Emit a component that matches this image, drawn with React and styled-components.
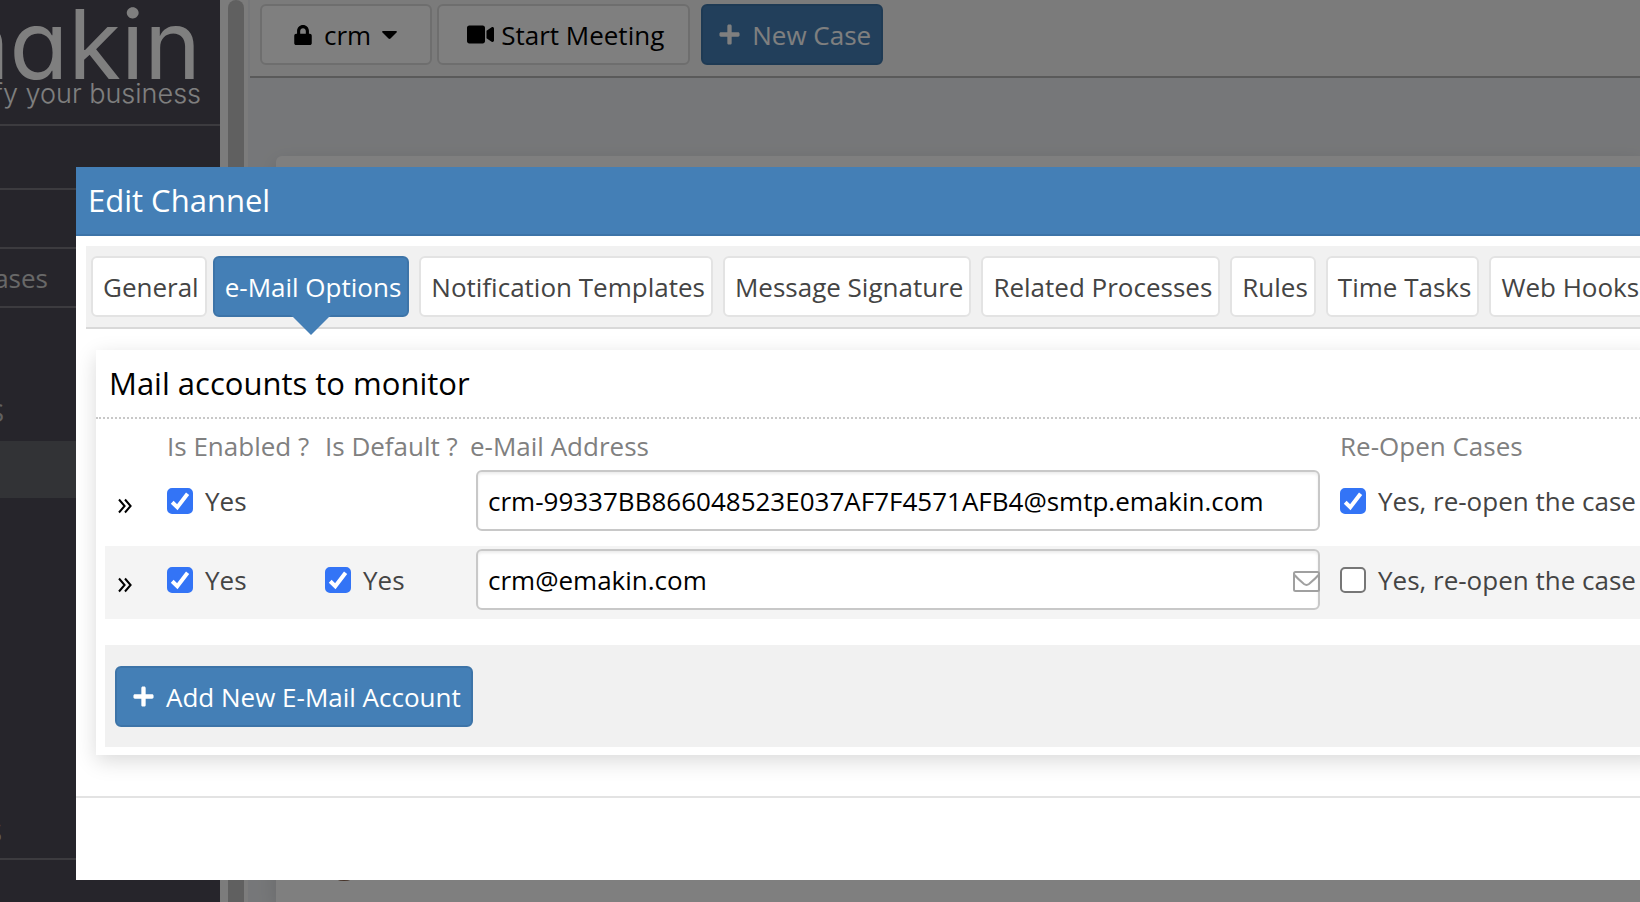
import styled, { createGlobalStyle } from 'styled-components';
import { FaLock, FaVideo, FaPlus } from 'react-icons/fa';

const TABS = [
  'General',
  'e-Mail Options',
  'Notification Templates',
  'Message Signature',
  'Related Processes',
  'Rules',
  'Time Tasks',
  'Web Hooks',
];

const ACCOUNTS = [
  {
    id: 'first',
    address: 'crm-99337BB866048523E037AF7F4571AFB4@smtp.emakin.com',
    canBeDefault: false,
    hasMailIcon: false,
    reopen: true,
  },
  {
    id: 'second',
    address: 'crm@emakin.com',
    canBeDefault: true,
    hasMailIcon: true,
    reopen: false,
  },
];

export default function App() {
  return (
    <>
      <GlobalStyle />
      <Page>
        <Sidebar>
          <Brand>
            <BrandName>emakin</BrandName>
            <BrandSlogan>simplify your business</BrandSlogan>
          </Brand>
          <SideRow $height={62} />
          <SideRow $height={57} />
          <SideRow $height={57}>
            <SideLink href="#cases">Cases</SideLink>
          </SideRow>
          <SideGroup $height={133}>
            <SideHeading>S</SideHeading>
          </SideGroup>
          <SideSelected />
          <SideGroup $height={362} $line>
            <SideHeading $last>S</SideHeading>
          </SideGroup>
        </Sidebar>
        <ScrollTrack>
          <ScrollThumb />
        </ScrollTrack>
        <Main>
          <Toolbar>
            <ToolButton type="button" $pad="0 33px 0 31px" $gap={11}>
              <FaLock size={20} />
              <span>crm</span>
              <Caret viewBox="0 0 15 8">
                <path d="M1 0h13q1.500 .5 .5 1.500L8.500 7.500q-1 .8-2 0L.5 1.500Q-.5 .5 1 0z" />
              </Caret>
            </ToolButton>
            <ToolButton type="button" $pad="0 24px 0 28px" $gap={7}>
              <FaVideo size={27} />
              <span>Start Meeting</span>
            </ToolButton>
            <ToolbarPrimary type="button">
              <FaPlus size={23} />
              New Case
            </ToolbarPrimary>
          </Toolbar>
          <Card>
            <Avatar />
          </Card>
        </Main>
      </Page>
      <Overlay />
      <Modal role="dialog" aria-labelledby="dialog-title">
        <ModalHeader>
          <ModalTitle id="dialog-title">Edit Channel</ModalTitle>
        </ModalHeader>
        <ModalBody>
          <TabBar>
            {TABS.map((tab) => (
              <Tab key={tab} type="button" $active={tab === 'e-Mail Options'}>
                {tab}
              </Tab>
            ))}
          </TabBar>
          <Panel>
            <PanelTitle>Mail accounts to monitor</PanelTitle>
            <PanelBody>
              <AccountTable>
                <colgroup>
                  <Col $width={62} />
                  <Col $width={158} />
                  <Col $width={145} />
                  <col />
                  <Col $width={320} />
                </colgroup>
                <thead>
                  <tr>
                    <td />
                    <HeadCell>Is Enabled ?</HeadCell>
                    <HeadCell>Is Default ?</HeadCell>
                    <HeadCell>e-Mail Address</HeadCell>
                    <HeadCell>Re-Open Cases</HeadCell>
                  </tr>
                </thead>
                <tbody>
                  {ACCOUNTS.map((account) => (
                    <AccountRow key={account.id} account={account} />
                  ))}
                </tbody>
              </AccountTable>
              <PanelFooter>
                <PrimaryButton type="button">
                  <FaPlus size={23} />
                  Add New E-Mail Account
                </PrimaryButton>
              </PanelFooter>
            </PanelBody>
          </Panel>
        </ModalBody>
        <ModalFooter />
      </Modal>
    </>
  );
}

function AccountRow({ account }) {
  return (
    <Row>
      <Cell>
        <ExpandButton type="button" aria-label="Expand">
          <svg width="16" height="16" viewBox="0 0 16 16" fill="none" stroke="#000" strokeWidth="2">
            <path d="M2 1.500 7.600 8 2 14.500M8 1.500 13.600 8 8 14.500" />
          </svg>
        </ExpandButton>
      </Cell>
      <Cell>
        <CheckField label="Yes" checked />
      </Cell>
      <Cell>{account.canBeDefault && <CheckField label="Yes" checked />}</Cell>
      <Cell>
        <AddressField>
          <AddressInput type="text" aria-label="e-Mail Address" defaultValue={account.address} />
          {account.hasMailIcon && (
            <MailIcon viewBox="0 0 27 21">
              <rect x="1" y="1" width="25" height="19" rx="1.5" />
              <path d="M1.500 4C5 8 8 10.500 11 13c1.800 1.300 3.200 1.300 5 0 3-2.500 6-5 9.500-9" />
            </MailIcon>
          )}
        </AddressField>
      </Cell>
      <Cell>
        <CheckField label="Yes, re-open the case" checked={account.reopen} />
      </Cell>
    </Row>
  );
}

function CheckField({ label, checked }) {
  return (
    <CheckLabel>
      <CheckBox>
        <CheckInput type="checkbox" defaultChecked={checked} />
        <CheckMark viewBox="0 0 26 26">
          <path d="M5.200 14.300 10.300 19.200 20.600 5.800" />
        </CheckMark>
      </CheckBox>
      {label}
    </CheckLabel>
  );
}

const GlobalStyle = createGlobalStyle`
  * {
    box-sizing: border-box;
  }

  body {
    margin: 0;
    overflow: hidden;
    font-family: 'Open Sans', 'Liberation Sans', sans-serif;
    font-size: 26px;
    color: #444;
  }

  button, input {
    font: inherit;
  }
`;

const Page = styled.div`
  display: flex;
  height: 100vh;
  overflow: hidden;
  background: #edeff2;
`;

const Sidebar = styled.nav`
  width: 220px;
  flex-shrink: 0;
  overflow: hidden;
  background: #4c4a56;
`;

const Brand = styled.div`
  display: flex;
  flex-direction: column;
  align-items: flex-end;
  height: 126px;
  padding-right: 19px;
  border-bottom: 2px solid #78767f;
  font-family: Inter, 'Liberation Sans', sans-serif;
  font-feature-settings: 'cv11';
  color: #fff;
  white-space: nowrap;
`;

const BrandName = styled.div`
  font-size: 96px;
  line-height: 88px;
`;

const BrandSlogan = styled.div`
  font-size: 27px;
  font-weight: 300;
  line-height: 12px;
`;

const SideRow = styled.div`
  display: flex;
  align-items: center;
  height: ${({ $height }) => $height + 2}px;
  border-bottom: 2px solid #78767f;
`;

const SideLink = styled.a`
  display: flex;
  justify-content: flex-end;
  width: 48px;
  color: #d0d0d0;
  text-decoration: none;
`;

const SideGroup = styled.div`
  display: flex;
  flex-direction: column;
  justify-content: center;
  height: ${({ $height }) => $height}px;
  border-bottom: ${({ $line }) => ($line ? '2px solid #78767f' : 'none')};
`;

const SideHeading = styled.div`
  display: flex;
  justify-content: flex-end;
  width: ${({ $last }) => ($last ? 2 : 4)}px;
  margin-top: ${({ $last }) => ($last ? 308 : 74)}px;
  color: #c0c0c0;
`;

const SideSelected = styled.div`
  height: 57px;
  background: #64666c;
`;

const ScrollTrack = styled.div`
  flex-shrink: 0;
  width: 28px;
  padding: 0 4px 0 8px;
  background: #f8f8f8;
`;

const ScrollThumb = styled.div`
  height: 100%;
  border-radius: 8px 8px 0 0;
  background: #c1c1c1;
`;

const Main = styled.main`
  display: flex;
  flex-direction: column;
  flex-grow: 1;
  padding-left: 2px;
`;

const Toolbar = styled.header`
  display: flex;
  height: 78px;
  padding: 4px 10px;
  border-bottom: 2px solid #b5b5b5;
  background: #f7f7f7;
`;

const Button = styled.button`
  display: flex;
  align-items: center;
  height: 61px;
  border-radius: 6px;
  white-space: nowrap;
`;

const ToolButton = styled(Button)`
  gap: ${({ $gap }) => $gap}px;
  margin-right: 5px;
  padding: ${({ $pad }) => $pad};
  border: 2px solid #dcdcdc;
  background: #fff;
  color: #000;
`;

const Caret = styled.svg`
  width: 15px;
  height: 8px;
`;

const PrimaryButton = styled(Button)`
  gap: 11px;
  padding: 0 10px 0 15px;
  border: 2px solid #3d74a8;
  background: #447fb6;
  color: #fff;
`;

const ToolbarPrimary = styled(PrimaryButton)`
  margin-left: 6px;
`;

const Card = styled.section`
  flex-grow: 1;
  margin: 78px 0 0 26px;
  padding: 685px 0 0 48px;
  border-radius: 6px 0 0 0;
  background: #fff;
  box-shadow: 0 6px 20px rgba(0, 0, 0, 0.12);
`;

const Avatar = styled.div`
  width: 40px;
  height: 40px;
  border-radius: 50%;
  background: #8a6450;
`;

const Overlay = styled.div`
  position: fixed;
  inset: 0;
  background: rgba(0, 0, 0, 0.5);
`;

const Modal = styled.div`
  position: fixed;
  top: 167px;
  left: 76px;
  right: 0;
  overflow: hidden;
  background: #fff;
`;

const ModalHeader = styled.div`
  display: flex;
  align-items: center;
  height: 69px;
  padding: 0 12px 2px;
  border-bottom: 2px solid #3d74a8;
  background: #447fb6;
`;

const ModalTitle = styled.h1`
  margin: 0;
  font-size: 31px;
  font-weight: 400;
  color: #fff;
`;

const ModalBody = styled.div`
  padding: 10px 0 41px 10px;
`;

const ModalFooter = styled.div`
  height: 84px;
  border-top: 2px solid #e3e3e3;
`;

const TabBar = styled.div`
  display: flex;
  height: 83px;
  padding: 10px 0 0 5px;
  border-bottom: 2px solid #d9d9d9;
  background: #f1f1f1;
`;

const Tab = styled(Button)`
  position: relative;
  flex-shrink: 0;
  margin-right: 10px;
  padding: 0 6px 0 10px;
  border: 2px solid ${({ $active }) => ($active ? '#3d74a8' : '#e3e3e3')};
  background: ${({ $active }) => ($active ? '#447fb6' : '#fff')};
  color: ${({ $active }) => ($active ? '#fff' : '#444')};

  &:first-child {
    margin-right: 6px;
  }

  &::after {
    content: '';
    display: ${({ $active }) => ($active ? 'block' : 'none')};
    position: absolute;
    top: 57px;
    left: 50%;
    margin-left: -20px;
    border: 20px solid transparent;
    border-top-color: #447fb6;
    border-bottom: 0;
  }
`;

/* the panel runs on past the right edge of the dialog */
const Panel = styled.section`
  margin: 21px -20px 0 10px;
  background: #fff;
  box-shadow: 0 6px 20px rgba(0, 0, 0, 0.15);
`;

const PanelTitle = styled.h2`
  display: flex;
  align-items: center;
  height: 69px;
  margin: 0;
  padding: 0 13px 2px;
  border-bottom: 2px dotted #c8c8c8;
  font-size: 31px;
  font-weight: 400;
  color: #000;
`;

const PanelBody = styled.div`
  padding: 0 0 8px 9px;
`;

const AccountTable = styled.table`
  width: 100%;
  table-layout: fixed;
  border-spacing: 0 6px;
`;

const Col = styled.col`
  width: ${({ $width }) => $width}px;
`;

const HeadCell = styled.th`
  padding: 6px 0 0;
  font-weight: 400;
  line-height: 30px;
  text-align: left;
  white-space: nowrap;
  color: #808080;
`;

const Row = styled.tr`
  &:nth-child(even) {
    background: #f4f4f4;
  }
`;

const Cell = styled.td`
  height: 73px;
  padding: 3px 0 9px;
`;

const ExpandButton = styled.button`
  display: flex;
  margin: 10px 0 0 12px;
  padding: 0;
  border: 0;
  background: none;
`;

const CheckLabel = styled.label`
  display: flex;
  align-items: center;
  gap: 12px;
  white-space: nowrap;
`;

const CheckBox = styled.span`
  display: grid;
  width: 26px;
  height: 26px;
`;

const CheckMark = styled.svg`
  grid-area: 1 / 1;
  fill: none;
  stroke: #fff;
  stroke-width: 4;
  pointer-events: none;
`;

const CheckInput = styled.input`
  grid-area: 1 / 1;
  appearance: none;
  width: 26px;
  height: 26px;
  margin: 0;
  border: 2px solid #767676;
  border-radius: 5px;
  background: #fff;

  &:checked {
    border-color: #3374f6;
    background: #3374f6;
  }
`;

const AddressField = styled.div`
  display: grid;
  align-items: center;
  margin: 0 20px 0 6px;
`;

const AddressInput = styled.input`
  grid-area: 1 / 1;
  width: 100%;
  height: 61px;
  padding: 0 10px;
  border: 2px solid #c8c8c8;
  border-radius: 6px;
  background: #fff;
  box-shadow: inset 0 2px 3px rgba(0, 0, 0, 0.08);
  color: #000;
`;

const MailIcon = styled.svg`
  grid-area: 1 / 1;
  justify-self: end;
  width: 27px;
  height: 21px;
  margin-top: 3px;
  fill: none;
  stroke: #a0a0a0;
  stroke-width: 2;
`;

const PanelFooter = styled.div`
  margin-top: 20px;
  padding: 21px 10px 20px;
  background: #f1f1f1;
`;
